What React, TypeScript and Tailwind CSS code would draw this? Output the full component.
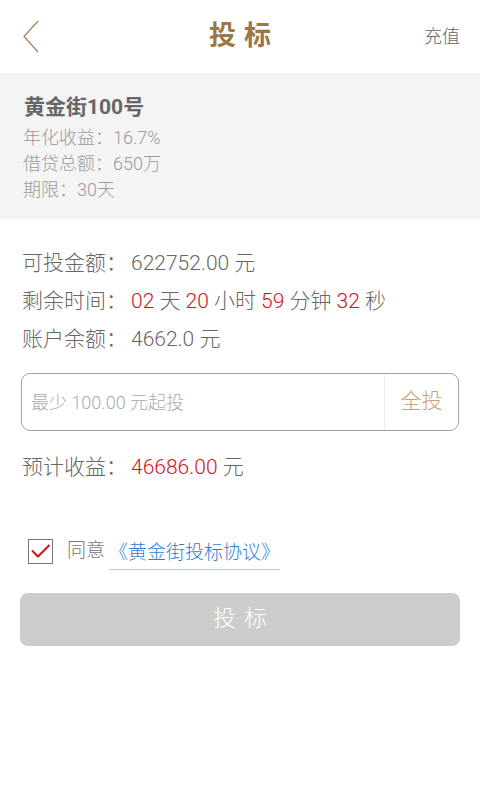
import { useState } from "react";

const font = { fontFamily: 'Roboto, "Noto Sans CJK SC", sans-serif' };

const InfoRow = ({ label, children }: { label: string; children: React.ReactNode }) => (
  <div className="flex items-center h-[38px] text-[21px] text-[#666] font-light">
    <span className="w-[109px]">{label}：</span>
    <span>{children}</span>
  </div>
);

const Red = ({ children }: { children: React.ReactNode }) => (
  <span className="text-[#d0141c]">{children}</span>
);

const App = () => {
  const [agreed, setAgreed] = useState(true);
  const [amount, setAmount] = useState("");

  return (
    <div className="w-[480px] min-h-[800px] bg-white" style={font}>
      {/* header */}
      <div className="h-[73px] flex items-center justify-between px-[22px]">
        <button className="w-[40px] h-[40px] flex items-center">
          <svg width="18" height="34" viewBox="0 0 18 34">
            <polyline points="16,1 2,16.5 16,32" fill="none" stroke="#a68657" strokeWidth="1.3" />
          </svg>
        </button>
        <h1 className="text-[27px] font-bold text-[#9b7747] tracking-[8px] pl-[6px]">投标</h1>
        <button className="text-[18px] text-[#666] w-[40px] text-right -mr-[2px] font-light">充值</button>
      </div>

      {/* product */}
      <div className="bg-[#f4f4f4] h-[146px] px-[24px] pt-[19px]">
        <div className="text-[21px] font-bold text-[#666] leading-[30px]">黄金街100号</div>
        <div className="mt-[3px] text-[18px] text-[#9a9a9a] leading-[26px] font-light -ml-[1px]">
          <div>年化收益：16.7%</div>
          <div>借贷总额：650万</div>
          <div>期限：30天</div>
        </div>
      </div>

      {/* amounts */}
      <div className="px-[22px] pt-[26px]">
        <InfoRow label="可投金额">622752.00 元</InfoRow>
        <InfoRow label="剩余时间">
          <Red>02</Red> 天 <Red>20</Red> 小时 <Red>59</Red> 分钟 <Red>32</Red> 秒
        </InfoRow>
        <InfoRow label="账户余额">4662.0 元</InfoRow>
      </div>

      <div className="px-[21px] mt-[14px]">
        <div className="flex h-[58px] border border-[#a3a3a3] rounded-[9px] overflow-hidden">
          <input
            value={amount}
            onChange={(e) => setAmount(e.target.value)}
            placeholder="最少 100.00 元起投"
            className="flex-1 min-w-0 pl-[9px] text-[18px] font-light text-[#666] placeholder:text-[#aaa] outline-none bg-transparent"
          />
          <button className="w-[74px] border-l border-[#eee] text-[21px] font-light text-[#c4a477]">全投</button>
        </div>
      </div>

      <div className="px-[22px] mt-[18px]">
        <InfoRow label="预计收益">
          <Red>46686.00</Red> 元
        </InfoRow>
      </div>

      {/* agreement */}
      <div className="flex items-center px-[28px] mt-[51px] h-[26px]">
        <button
          onClick={() => setAgreed(!agreed)}
          className="w-[25px] h-[25px] border border-[#777] bg-white flex items-center justify-center"
        >
          {agreed && (
            <svg width="21" height="16" viewBox="0 0 21 16">
              <polyline points="2,7.5 8,13.5 19.5,2" fill="none" stroke="#c4161c" strokeWidth="2" />
            </svg>
          )}
        </button>
        <span className="ml-[14px] text-[19px] text-[#777] font-light">同意</span>
        <a className="ml-[4px] text-[19px] text-[#2f7fd6] border-b border-[#b7cfe8] leading-[28px] mt-[6px] pb-[2px] font-light">
          《黄金街投标协议》
        </a>
      </div>

      <div className="px-[20px] mt-[29px]">
        <button
          disabled={!agreed}
          className="w-full h-[53px] rounded-[8px] bg-[#cccccc] text-white text-[23px] tracking-[8px] pl-[8px] font-light"
        >
          投标
        </button>
      </div>
    </div>
  );
};

export default App;
